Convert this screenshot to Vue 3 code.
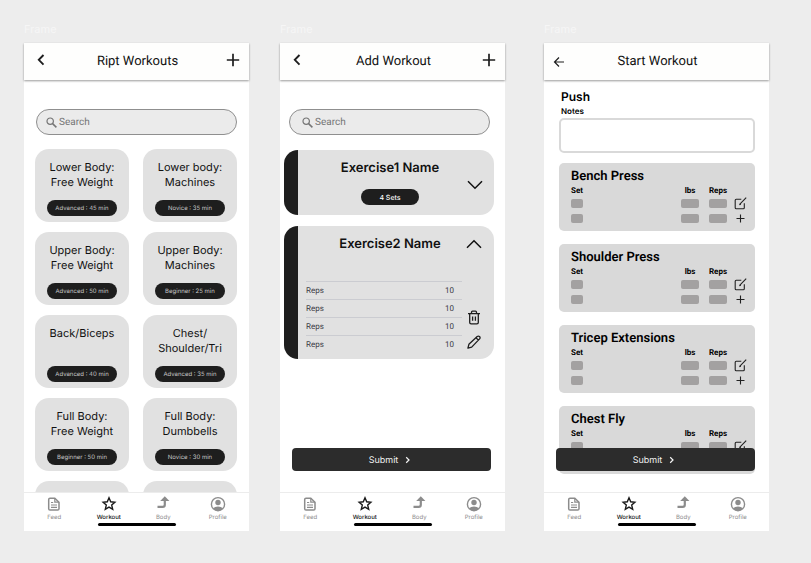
<script setup>
const navItems = [
  { name: 'Feed', icon: 'feed' },
  { name: 'Workout', icon: 'star', active: true },
  { name: 'Body', icon: 'body' },
  { name: 'Profile', icon: 'profile' },
]

const screens = [
  { id: 'list', title: 'Ript Workouts', back: 'chevron', add: true },
  { id: 'add', title: 'Add Workout', back: 'chevron', add: true },
  { id: 'start', title: 'Start Workout', back: 'arrow', add: false },
]

const workouts = [
  { lines: ['Lower Body:', 'Free Weight'], level: 'Advanced : 45 min' },
  { lines: ['Lower body:', 'Machines'], level: 'Novice : 35 min' },
  { lines: ['Upper Body:', 'Free Weight'], level: 'Advanced : 50 min' },
  { lines: ['Upper Body:', 'Machines'], level: 'Beginner : 25 min' },
  { lines: ['Back/Biceps'], level: 'Advanced : 40 min' },
  { lines: ['Chest/', 'Shoulder/Tri'], level: 'Advanced : 35 min' },
  { lines: ['Full Body:', 'Free Weight'], level: 'Beginner : 50 min' },
  { lines: ['Full Body:', 'Dumbbells'], level: 'Novice : 30 min' },
  { lines: [], level: '' },
  { lines: [], level: '' },
]

const reps = [10, 10, 10, 10]
const lifts = ['Bench Press', 'Shoulder Press', 'Tricep Extensions', 'Chest Fly']
</script>

<template>
  <main class="board">
    <section v-for="screen in screens" :key="screen.id" class="frame" :class="screen.id">
      <span class="frame-label">Frame</span>
      <div class="phone">
        <header class="topbar">
          <button class="icon-btn" aria-label="Back">
            <svg v-if="screen.back === 'chevron'" width="12" height="12" viewBox="0 0 12 12">
              <path d="M8.5 1 3.8 5.8l4.7 4.8" fill="none" stroke="#1e1e1e" stroke-width="1.9" />
            </svg>
            <svg v-else class="arrow" width="12" height="12" viewBox="0 0 12 12">
              <path d="M11 6H1.8M6 1.5 1.5 6 6 10.5" fill="none" stroke="#1e1e1e" stroke-width="1.2" />
            </svg>
          </button>
          <h1>{{ screen.title }}</h1>
          <button v-if="screen.add" class="icon-btn" aria-label="Add">
            <svg width="14" height="14" viewBox="0 0 14 14">
              <path d="M7 .8v12.4M.8 7h12.4" stroke="#1e1e1e" stroke-width="1.7" />
            </svg>
          </button>
        </header>

        <div class="body">
          <div class="scroll">
            <label v-if="screen.id !== 'start'" class="search">
              <svg width="11" height="11" viewBox="0 0 11 11" fill="none" stroke="#757575">
                <circle cx="4.2" cy="4.2" r="3.2" stroke-width="1.2" />
                <path d="m6.6 6.6 3.8 3.8" stroke-width="1.5" />
              </svg>
              <input type="search" placeholder="Search" aria-label="Search" />
            </label>

            <div v-if="screen.id === 'list'" class="workouts">
              <article v-for="(w, i) in workouts" :key="i" class="workout">
                <h2><span v-for="line in w.lines" :key="line">{{ line }}</span></h2>
                <span v-if="w.level" class="chip">{{ w.level }}</span>
              </article>
            </div>

            <div v-if="screen.id === 'add'" class="exercises">
              <article class="exercise">
                <div class="exercise-main">
                  <h2>Exercise1 Name</h2>
                  <span class="chip sets">4 Sets</span>
                </div>
                <div class="exercise-actions closed">
                  <button class="icon-btn" aria-label="Expand">
                    <svg width="16" height="10" viewBox="0 0 16 10">
                      <path d="m1 1.2 7 7 7-7" fill="none" stroke="#111" stroke-width="1.5" />
                    </svg>
                  </button>
                </div>
              </article>
              <article class="exercise">
                <div class="exercise-main">
                  <h2>Exercise2 Name</h2>
                  <table class="reps">
                    <tbody>
                      <tr v-for="(n, i) in reps" :key="i">
                        <th scope="row">Reps</th>
                        <td>{{ n }}</td>
                      </tr>
                    </tbody>
                  </table>
                </div>
                <div class="exercise-actions open">
                  <button class="icon-btn" aria-label="Collapse">
                    <svg width="16" height="10" viewBox="0 0 16 10">
                      <path d="m1 8.8 7-7 7 7" fill="none" stroke="#111" stroke-width="1.5" />
                    </svg>
                  </button>
                  <div class="tools">
                    <button class="icon-btn" aria-label="Delete">
                      <svg width="14" height="15" viewBox="0 0 14 15" fill="none" stroke="#1e1e1e" stroke-width="1.3">
                        <path d="M1 3.6h12M4.5 3.4V2.2q0-1 1-1h3q1 0 1 1v1.2M2.7 3.6v8.8q0 1.4 1.4 1.4h5.8q1.4 0 1.4-1.4V3.6M5.6 6.6v4.2M8.4 6.6v4.2" />
                      </svg>
                    </button>
                    <button class="icon-btn" aria-label="Edit">
                      <svg width="14" height="14" viewBox="0 0 14 14" fill="none" stroke="#1e1e1e" stroke-width="1.3" stroke-linejoin="round">
                        <path d="M.9 13.1l1-3.8 8.3-7.8q1.2-.9 2.3.1t.1 2.3L4.7 12.1zM9 2.7l2.4 2.4" />
                      </svg>
                    </button>
                  </div>
                </div>
              </article>
            </div>

            <div v-if="screen.id === 'start'" class="session">
              <h2>Push</h2>
              <label for="notes">Notes</label>
              <textarea id="notes"></textarea>
              <article v-for="lift in lifts" :key="lift" class="lift">
                <h3>{{ lift }}</h3>
                <table>
                  <thead>
                    <tr>
                      <th class="set">Set</th>
                      <th class="num">lbs</th>
                      <th class="num">Reps</th>
                      <th class="act"></th>
                    </tr>
                  </thead>
                  <tbody>
                    <tr v-for="row in 2" :key="row">
                      <td class="set"><input class="small" :aria-label="`${lift} set ${row}`" /></td>
                      <td class="num"><input :aria-label="`${lift} lbs ${row}`" /></td>
                      <td class="num"><input :aria-label="`${lift} reps ${row}`" /></td>
                      <td class="act">
                        <button v-if="row === 1" class="icon-btn" aria-label="Edit set">
                          <svg width="13" height="13" viewBox="0 0 13 13" fill="none" stroke="#222" stroke-width="1.1">
                            <path d="M7.3 2.2H2.2q-1 0-1 1v7.6q0 1 1 1h7.1q1 0 1-1V6.2M5.4 7.7 12.2.6M5.4 7.7l1.5-.4" />
                          </svg>
                        </button>
                        <button v-else class="icon-btn" aria-label="Add set">
                          <svg width="11" height="11" viewBox="0 0 11 11">
                            <path d="M5.5 1.5v8M1.5 5.5h8" stroke="#222" stroke-width="1.1" />
                          </svg>
                        </button>
                      </td>
                    </tr>
                  </tbody>
                </table>
              </article>
            </div>
          </div>

          <button v-if="screen.id !== 'list'" class="submit">
            <span>Submit</span>
            <svg width="6" height="8" viewBox="0 0 6 8">
              <path d="m1.2 1.3 2.8 2.7-2.8 2.7" fill="none" stroke="#f5f5f5" stroke-width="1.2" />
            </svg>
          </button>
        </div>

        <nav class="tabs">
          <div class="tab-row">
            <a v-for="item in navItems" :key="item.name" href="#" :class="{ active: item.active }">
              <svg v-if="item.icon === 'feed'" width="16" height="16" viewBox="0 0 16 16" fill="none" stroke="#8c8c8c" stroke-width="1.5">
                <path d="M4 2.2h4.8L13 6.2v6.6q0 1.3-1.3 1.3H4q-1.3 0-1.3-1.3V3.5Q2.7 2.2 4 2.2z" />
                <path d="M8.8 2.2v4H13M5 6.5h2.2M5 9h6M5 11.3h6" stroke-width="1.2" />
              </svg>
              <svg v-else-if="item.icon === 'star'" width="16" height="16" viewBox="0 0 16 16">
                <path d="m8 1.8 1.7 4 4.2.4-3.2 2.9 1 4.2L8 11.1l-3.7 2.2 1-4.2-3.2-2.9 4.2-.4z" fill="none" stroke="#1a1a1a" stroke-width="1.4" />
              </svg>
              <svg v-else-if="item.icon === 'body'" width="16" height="16" viewBox="0 0 16 16">
                <path d="M2.5 10.8h5.2q2.1 0 2.1-2.1V4" fill="none" stroke="#8c8c8c" stroke-width="2.2" />
                <path d="M9.8.2 14.4 4.9H5.2z" fill="#8c8c8c" />
              </svg>
              <svg v-else width="16" height="16" viewBox="0 0 16 16">
                <circle cx="8" cy="8.2" r="6.6" fill="none" stroke="#8c8c8c" stroke-width="1.4" />
                <circle cx="8" cy="6.5" r="2.7" fill="#8c8c8c" />
                <path d="M3 12.2Q5 10.6 8 10.6t5 1.6Q10.8 14.8 8 14.8t-5-2.6z" fill="#8c8c8c" />
              </svg>
              <span>{{ item.name }}</span>
            </a>
          </div>
          <div class="home-indicator"></div>
        </nav>
      </div>
    </section>
  </main>
</template>

<style>
body {
  background: #ededed;
}
</style>

<style scoped>
* {
  box-sizing: border-box;
}
.board {
  display: grid;
  grid-template-columns: 1fr 31px 1fr 39px 1fr;
  height: 100vh;
  min-height: 400px;
  padding: 23px 42px 32px 24px;
  font-family: Inter, sans-serif;
  color: #111;
  text-rendering: geometricPrecision;
}
.frame {
  display: flex;
  flex-direction: column;
  min-width: 0;
  min-height: 0;
}
.frame.list { grid-column: 1; }
.frame.add { grid-column: 3; }
.frame.start { grid-column: 5; }
.frame-label {
  height: 20px;
  font-size: 11px;
  line-height: 13px;
  color: #f6f6f6;
}
.phone {
  flex: 1;
  min-height: 0;
  display: flex;
  flex-direction: column;
  background: #fff;
}
h1, h2, h3 {
  margin: 0;
}
.icon-btn {
  display: flex;
  align-items: center;
  justify-content: center;
  padding: 0;
  border: 0;
  background: none;
}
.topbar {
  position: relative;
  display: grid;
  grid-template-columns: 34px 1fr 32px;
  align-items: center;
  height: 37px;
  padding-bottom: 4px;
  background: #fefefd;
  box-shadow: 0 1px 2px rgba(0, 0, 0, 0.4);
}
.topbar h1 {
  padding-top: 4px;
  font: 400 13px/20px Roboto, sans-serif;
  text-align: center;
}
.start .topbar .icon-btn {
  padding: 4px 4px 0 0;
}
.body {
  position: relative;
  flex: 1;
  min-height: 0;
  display: flex;
  flex-direction: column;
}
.scroll {
  flex: 1;
  min-height: 0;
  overflow-y: auto;
  scrollbar-width: none;
}
.search {
  display: flex;
  align-items: center;
  gap: 2px;
  height: 26px;
  margin: 29px 12px 14px;
  padding-left: 9px;
  border: 1px solid #8f8f8f;
  border-radius: 13px;
  background: #ebebeb;
}
.add .search {
  margin: 29px 15px 15px 9px;
  padding-left: 12px;
}
.search input {
  flex: 1;
  min-width: 0;
  padding: 2px 0 0;
  border: 0;
  background: none;
  font: 400 10px/14px Roboto, sans-serif;
  text-rendering: inherit;
}
.search input::placeholder {
  color: #757575;
}
.workouts {
  display: grid;
  grid-template-columns: 1fr 1fr;
  gap: 10px 14px;
  padding: 0 12px 0 11px;
}
.workout {
  display: flex;
  flex-direction: column;
  align-items: center;
  justify-content: space-between;
  height: 73px;
  padding: 11px 4px 6px;
  border-radius: 14px;
  background: #e1e1e1;
}
.workout h2 {
  font-size: 11px;
  font-weight: 400;
  line-height: 15px;
  text-align: center;
}
.workout h2 span {
  display: block;
}
.chip {
  width: 70px;
  height: 16px;
  border-radius: 8px;
  background: #1e1e1e;
  color: #c8c8c8;
  font-size: 6px;
  line-height: 17px;
  text-align: center;
  white-space: nowrap;
}
.chip.sets {
  width: 58px;
  margin-top: 13px;
  color: #fff;
  font-size: 7px;
  font-weight: 500;
}
.exercises {
  display: flex;
  flex-direction: column;
  gap: 11px;
  padding: 0 11px 0 4px;
}
.exercise {
  display: grid;
  grid-template-columns: 1fr 32px;
  padding: 10px 0 5px 8px;
  border-left: 14px solid #1e1e1e;
  border-radius: 14px;
  background: #e1e1e1;
}
.exercise-main {
  display: flex;
  flex-direction: column;
  align-items: center;
}
.exercise h2 {
  padding-left: 12px;
  font-size: 13px;
  font-weight: 600;
  line-height: 17px;
}
.exercise .sets {
  margin: 12px 0 5px 12px;
}
.exercise-actions {
  display: flex;
  flex-direction: column;
  align-items: center;
}
.exercise-actions.closed {
  padding: 20px 6px 0 0;
}
.exercise-actions.open {
  justify-content: space-between;
  padding: 3px 9px 5px 0;
}
.tools {
  display: flex;
  flex-direction: column;
  gap: 10px;
}
.reps {
  width: 100%;
  margin-top: 28px;
  border-collapse: collapse;
  color: #3c3c46;
  font: 400 8px/17px Roboto, sans-serif;
}
.reps th,
.reps td {
  height: 18px;
  padding: 0;
  border-top: 1px solid #cbccd1;
  font-weight: 400;
  text-align: left;
}
.reps td {
  padding-right: 8px;
  text-align: right;
}
.session {
  display: flex;
  flex-direction: column;
  padding: 8px 14px 40px 15px;
  color: #000;
}
.session h2 {
  padding-left: 2px;
  font-size: 12px;
  font-weight: 600;
  line-height: 17px;
}
.session label {
  padding-left: 2px;
  font-size: 8px;
  font-weight: 600;
  line-height: 13px;
}
.session textarea {
  height: 35px;
  margin-bottom: 10px;
  border: 2px solid #d9d9d9;
  border-radius: 5px;
  background: #fff;
  font: 400 10px/14px Inter, sans-serif;
  resize: none;
}
.lift {
  margin-bottom: 13px;
  padding: 6px 7px 5px 12px;
  border-radius: 5px;
  background: #d9d9d9;
  font-family: Roboto, sans-serif;
}
.lift h3 {
  font-size: 13px;
  font-weight: 600;
  line-height: 16px;
}
.lift table {
  width: 100%;
  table-layout: fixed;
  border-collapse: collapse;
  font-size: 8px;
}
.lift th,
.lift td {
  padding: 0;
  text-align: center;
  vertical-align: middle;
}
.lift th {
  height: 11px;
  font-weight: 700;
  line-height: 11px;
}
.lift td {
  height: 15px;
}
.lift .set {
  text-align: left;
}
.lift .num {
  width: 28px;
}
.lift .act {
  width: 16px;
}
.lift .icon-btn {
  width: 16px;
  height: 14px;
}
.lift input {
  display: block;
  width: 18px;
  height: 9px;
  margin: 0 auto;
  padding: 0;
  border: 0;
  border-radius: 2px;
  background: #a3a1a1;
}
.lift input.small {
  width: 12px;
  margin: 0;
}
.submit {
  position: absolute;
  right: 14px;
  bottom: 21px;
  left: 12px;
  display: flex;
  align-items: center;
  justify-content: center;
  gap: 7px;
  height: 23px;
  padding: 0 3px 0 0;
  border: 0;
  border-radius: 4px;
  background: #2c2c2c;
  color: #f0f0f0;
  font: 400 9px/14px Inter, sans-serif;
  text-rendering: inherit;
}
.submit span {
  padding-top: 2px;
}
.tabs {
  position: relative;
  height: 39px;
  border-top: 1px solid #ececec;
  background: #fff;
}
.tab-row {
  display: grid;
  grid-template-columns: repeat(4, 1fr);
  padding: 3px 4px 0 3px;
}
.tab-row a {
  display: flex;
  flex-direction: column;
  align-items: center;
  color: #8c8c8c;
  font-size: 6px;
  line-height: 11px;
  text-decoration: none;
}
.tab-row a.active {
  color: #111;
  font-weight: 500;
}
.home-indicator {
  width: 78px;
  height: 3px;
  margin: 0 auto;
  border-radius: 2px;
  background: #000;
}
</style>
